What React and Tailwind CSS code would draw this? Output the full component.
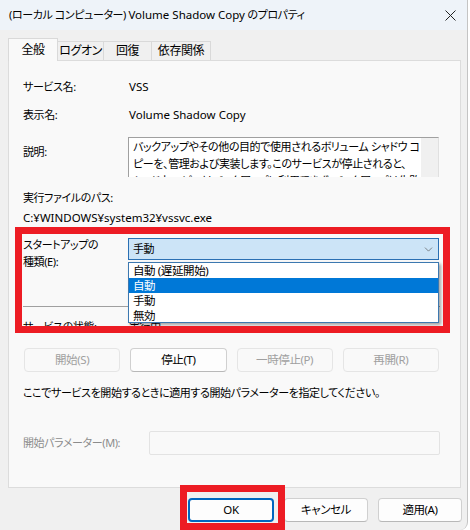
import { ChevronDown } from 'lucide-react'

const FONT = "font-['Noto_Sans','Noto_Sans_CJK_JP',sans-serif] [font-feature-settings:'palt']"

function Tab({ label, selected, w }) {
  if (selected) {
    return (
      <div
        className={`h-[23px] ${w} -mb-px flex items-center justify-center border border-b-0 border-[#d9d9d9] bg-[#f9f9f9] relative z-10 text-[12px]`}
      >
        {label}
      </div>
    )
  }
  return (
    <div className={`h-[19px] ${w} flex items-center justify-center border border-l-0 border-b-0 border-[#d9d9d9] bg-[#f0f0f0] text-[12px]`}>
      {label}
    </div>
  )
}

function Btn({ children, disabled, primary, w = 'w-full' }) {
  return (
    <div
      className={`${w} h-[24px] flex items-center justify-center rounded-[4px] text-[11.5px] ${
        disabled
          ? 'border border-[#e5e5e5] bg-[#f9f9f9] text-[#a0a0a0]'
          : primary
          ? 'border-2 border-[#0067c0] bg-[#fdfdfd] text-black'
          : 'border border-[#d0d0d0] border-b-[#b8b8b8] bg-[#fdfdfd] text-black'
      }`}
    >
      {children}
    </div>
  )
}

export default function App() {
  return (
    <div className={`w-[470px] h-[530px] bg-white relative overflow-hidden text-black tracking-[-0.4px] ${FONT}`}>
      <div className="w-[468px] h-[530px] bg-[#f0f0f0] border-r border-[#c4c4c4] rounded-br-lg flex flex-col">
        {/* title bar */}
        <div className="h-[30px] bg-[#eef3f9] flex items-center justify-between pl-[9px] pr-[11px] text-[11px]">
          <span>
            (ローカル コンピューター) <span className="tracking-normal text-[11.5px]">Volume Shadow Copy</span> のプロパティ
          </span>
          <svg width="11" height="11" viewBox="0 0 11 11" className="text-[#222]">
            <path d="M0.5 0.5 L10.5 10.5 M10.5 0.5 L0.5 10.5" stroke="currentColor" strokeWidth="1" />
          </svg>
        </div>

        {/* tabs */}
        <div className="mt-[8px] ml-[8px] flex items-end">
          <Tab label="全般" selected w="w-[50px]" />
          <Tab label="ログオン" w="w-[46px]" />
          <Tab label="回復" w="w-[48px]" />
          <Tab label="依存関係" w="w-[59px]" />
        </div>

        {/* panel */}
        <div className="ml-[8px] w-[453px] h-[428px] border border-[#dcdcdc] bg-[#f9f9f9] pl-[14px] pr-[20px] text-[11px] leading-[16px] flex flex-col">
          <div className="mt-[18px] flex">
            <div className="w-[106px]">サービス名:</div>
            <div className="tracking-normal text-[11.5px]">VSS</div>
          </div>
          <div className="mt-[12px] flex">
            <div className="w-[106px]">表示名:</div>
            <div className="tracking-normal text-[11.5px]">Volume Shadow Copy</div>
          </div>
          <div className="mt-[14px] flex">
            <div className="w-[105px] pt-[7px]">説明:</div>
            <div className="w-[311px] h-[40px] flex border-t border-l border-[#a0a0a0] border-r border-r-[#e0e0e0] bg-white overflow-hidden">
              <div className="flex-1 pl-[4px] pt-0 overflow-hidden whitespace-nowrap leading-[17px]">
                <div>バックアップやその他の目的で使用されるボリューム シャドウ コ</div>
                <div>ピーを、管理および実装します。このサービスが停止されると、</div>
                <div>シャドウ コピーはバックアップに利用できず、バックアップは失敗</div>
              </div>
              <div className="w-[17px] bg-[#f0f0f0]" />
            </div>
          </div>
          <div className="mt-[13px]">実行ファイルのパス:</div>
          <div className="mt-[4px] tracking-normal text-[11.5px]">C:¥WINDOWS¥system32¥vssvc.exe</div>

          <div className="mt-[10px] flex">
            <div className="w-[105px] leading-[17px]">
              <div>スタートアップの</div>
              <div>種類(E):</div>
            </div>
            <div className="mt-[2px] w-[311px] h-[22px] border border-[#2a6fb3] bg-[#cce4f7] flex items-center justify-between pl-[4px] pr-[3px]">
              <span>手動</span>
              <ChevronDown size={13} strokeWidth={1.25} className="text-[#555]" />
            </div>
          </div>

          <div className="mt-[36px] h-px bg-[#a0a0a0]" />
          <div className="mt-[12px] flex">
            <div className="w-[106px]">サービスの状態:</div>
            <div>実行中</div>
          </div>

          <div className="mt-[13px] ml-px grid grid-cols-4 gap-[10px] w-[415px]">
            <Btn disabled>開始(S)</Btn>
            <Btn>停止(T)</Btn>
            <Btn disabled>一時停止(P)</Btn>
            <Btn disabled>再開(R)</Btn>
          </div>

          <div className="mt-[13px]">ここでサービスを開始するときに適用する開始パラメーターを指定してください。</div>

          <div className="mt-[30px] flex items-center">
            <div className="w-[126px] text-[#8c8c8c]">開始パラメーター(M):</div>
            <div className="w-[291px] h-[24px] border border-[#e3e3e3] bg-[#f9f9f9] rounded-[2px]" />
          </div>
        </div>

        {/* bottom buttons */}
        <div className="mt-[10px] flex justify-end gap-[10px] pr-[5px]">
          <Btn primary w="w-[86px]">OK</Btn>
          <Btn w="w-[84px]">キャンセル</Btn>
          <Btn w="w-[84px]">適用(A)</Btn>
        </div>
      </div>

      {/* open dropdown list */}
      <div className="absolute left-[128px] top-[262px] w-[311px] border border-[#3c78b0] bg-white text-[11.5px] shadow-[2px_2px_3px_rgba(0,0,0,0.35)]">
        <div className="h-[15px] leading-[15px] pl-[4px]">自動 (遅延開始)</div>
        <div className="h-[15px] leading-[15px] pl-[4px] bg-[#0078d7] text-white">自動</div>
        <div className="h-[15px] leading-[15px] pl-[4px]">手動</div>
        <div className="h-[14px] leading-[15px] pl-[4px]">無効</div>
      </div>

      {/* red highlight boxes */}
      <div className="absolute left-[15px] top-[227px] w-[435px] h-[106px] border-[7px] border-[#ed1c24]" />
      <div className="absolute left-[180px] top-[485px] w-[105px] h-[45px] border-[7px] border-[#ed1c24]" />
    </div>
  )
}
